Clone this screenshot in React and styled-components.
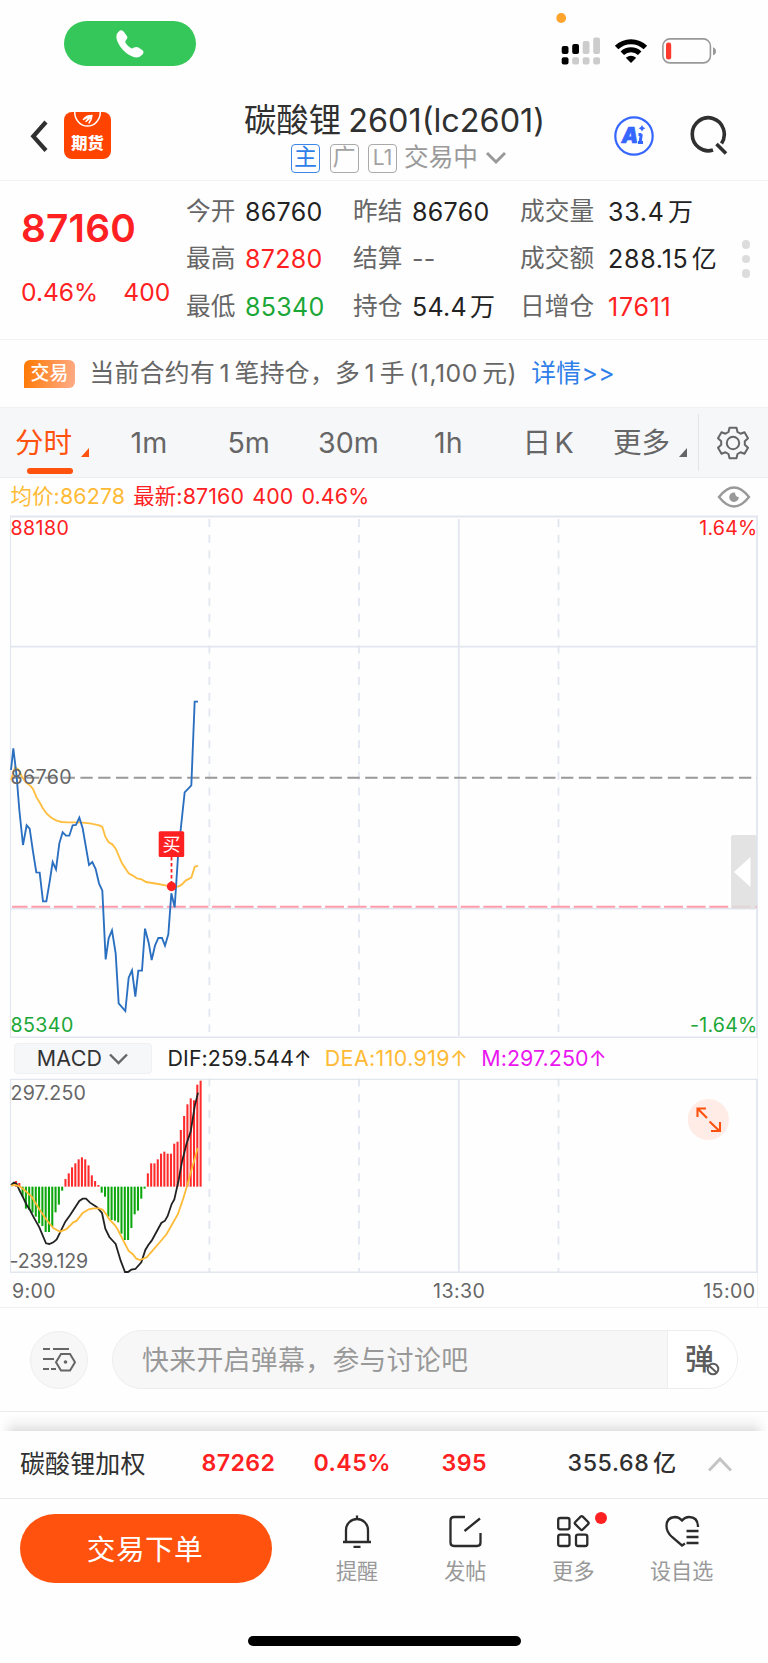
import styled, { createGlobalStyle } from 'styled-components';

const red = '#ff2121';
const green = '#1ba737';
const orange = '#ff520e';
const grid = '#e2e6ef';

const GlobalStyle = createGlobalStyle`
* { box-sizing: border-box; }
body {
  margin: 0;
  background: #fff;
  color: #222;
  font-family: Inter, 'Noto Sans CJK SC', sans-serif;
  line-height: 1.2;
}
svg { display: block; flex: none; }
`

const Screen = styled.div`
width: 768px;
height: 1663px;
background: #fefefe;
display: flex;
flex-direction: column;
overflow: hidden;
white-space: nowrap;
`

/* status bar */
const StatusBar = styled.div`
height: 90px;
display: flex;
justify-content: space-between;
padding: 0 50px 0 64px;
`
const CallPill = styled.div`
width: 132px;
height: 45px;
margin-top: 21.3px;
border-radius: 23px;
background: #35c759;
display: flex;
align-items: center;
justify-content: center;
`

/* header */
const Header = styled.header`
height: 91px;
border-bottom: 1.5px solid #f3f3f4;
display: flex;
align-items: flex-start;
padding: 0 33px 0 30px;
`
const Back = styled.svg`
width: 18px;
height: 32px;
margin-top: 30px;
`
const Logo = styled.div`
width: 47px;
height: 47px;
margin: 21.5px 0 0 16px;
border-radius: 8px;
background: #ff4400;
color: #fff;
font-size: 16.3px;
font-weight: 900;
line-height: 13px;
text-align: center;
`
const TitleBlock = styled.div`
width: 320px;
margin-left: 123px;
display: flex;
flex-direction: column;
align-items: center;
`
const Title = styled.h1`
margin: 12px 0 0 1px;
font-size: 32.4px;
line-height: 38px;
font-weight: 400;
color: #303030;
word-spacing: -2px;
`
const SubTitle = styled.div`
margin: 4px 0 0 9px;
height: 28px;
display: flex;
align-items: center;
color: #999;
font-size: 24.6px;
`
const Tag = styled.span`
width: 29px;
height: 29px;
margin-right: ${p => p.$small ? 7 : 9.5}px;
border: 1.5px solid ${p => p.$active ? '#3c86ea' : '#aaa'};
border-radius: 4px;
color: ${p => p.$active ? '#2f7fe8' : '#a2a2a2'};
font-size: ${p => p.$small ? 21 : 23}px;
line-height: 25px;
text-align: center;
`
const HeaderIcons = styled.div`
margin: 24px 0 0 59px;
display: flex;
gap: 33px;
`

/* quote */
const Quote = styled.section`
height: 159px;
border-bottom: 1.5px solid #f3f3f4;
display: flex;
align-items: center;
`
const Price = styled.div`
width: 186px;
height: 158px;
padding: 23px 0 0 21px;
color: ${red};
`
const Last = styled.div`
font-size: 38.8px;
line-height: 48px;
font-weight: 600;
letter-spacing: 0.2px;
`
const Change = styled.div`
display: flex;
gap: 25px;
margin-top: 24.5px;
font-size: 24.6px;
line-height: 30px;
`
const Stats = styled.div`
display: grid;
grid-template-columns: 59px 108px 59px 108px 88px 129px;
grid-auto-rows: 47.3px;
align-items: center;
margin-top: -1.5px;
font-size: 25px;
`
const Label = styled.span`
color: #666;
font-size: 24.7px;
`
const Value = styled.span`
color: ${p => p.$color || '#222'};
letter-spacing: ${p => p.$wide ? 0.75 : 0.3}px;
word-spacing: -4.5px;
`
const Dots = styled.div`
display: flex;
flex-direction: column;
gap: 6px;
margin: -2px 0 0 4.5px;
span {
  width: 8.6px;
  height: 8.6px;
  border-radius: 50%;
  background: #dcdcdc;
}
`

/* position notice */
const Notice = styled.section`
height: 67px;
padding: 1px 0 0 24px;
display: flex;
align-items: center;
font-size: 24.8px;
letter-spacing: 0.3px;
color: #666;
`
const Badge = styled.span`
width: 51px;
height: 28px;
margin-right: 14.5px;
border-radius: 6px 6px 6px 0;
background: linear-gradient(100deg, #ff7800, #ffac8a);
color: #fff;
font-size: 18.8px;
font-weight: 500;
line-height: 27px;
text-align: center;
`
const Num = styled.span`
margin: 0 4.5px;
letter-spacing: 0.5px;
`
const Link = styled.a`
margin-left: 14.5px;
color: #2f7fe8;
`

/* period tabs */
const Tabs = styled.nav`
height: 71px;
background: #f6f7f9;
border-top: 1.5px solid #f0f1f2;
border-bottom: 1.5px solid #ebecee;
display: grid;
grid-template-columns: 99px repeat(5, 99.8px) 100.5px 1fr;
align-items: center;
`
const Tab = styled.div`
height: 68px;
display: flex;
flex-direction: column;
align-items: ${p => p.$menu ? 'flex-start' : 'center'};
padding: ${p => p.$menu ? '17px 0 0 15px' : '17px 0 0'};
color: ${p => p.$active ? orange : '#666'};
font-size: 28.6px;
line-height: 34px;
word-spacing: -4.5px;
&::after {
  content: '';
  width: 46px;
  height: 6px;
  margin: 8.5px 0 0 12px;
  border-radius: 3px;
  background: ${p => p.$active ? orange : 'none'};
}
`
const TabText = styled.span`
display: flex;
align-items: flex-end;
gap: 8.5px;
svg { margin-bottom: 3px; }
`
const Settings = styled.div`
height: 57px;
border-left: 1.5px solid #e3e4e6;
display: flex;
align-items: center;
padding-left: 17px;
`

/* charts */
const Legend = styled.div`
height: 37px;
padding: 0 17px 0 10.5px;
display: flex;
align-items: center;
gap: 8px;
font-size: 21.4px;
letter-spacing: 0.15px;
color: ${red};
svg { margin-left: auto; }
`
const Avg = styled.span`
color: #ffba35;
`
const Plot = styled.svg`
width: 768px;
height: ${p => p.$height}px;
font-size: 19.6px;
letter-spacing: 0.4px;
`
const MacdBar = styled.div`
width: 758px;
height: 40px;
border-right: 1.5px solid #eff1f5;
padding: 1px 0 0 14px;
display: flex;
align-items: center;
gap: 13px;
font-size: 21.4px;
`
const Picker = styled.button`
width: 138px;
height: 31px;
border: 1px solid #eff0f2;
border-radius: 4px;
background: #f6f7f9;
color: #333;
display: flex;
align-items: center;
justify-content: center;
gap: 7px;
margin-right: 2.5px;
padding: 0 1px 0 0;
font: inherit;
letter-spacing: 0.3px;
`
const Series = styled.span`
color: ${p => p.$color};
letter-spacing: ${p => p.$spacing || 0.1}px;
`
const Axis = styled.div`
width: 758px;
height: 34px;
border-right: 1.5px solid #eff1f5;
padding: 4px 1.5px 0 12px;
display: flex;
justify-content: space-between;
align-items: center;
font-size: 19.6px;
letter-spacing: 0.4px;
color: #666;
span:nth-child(2) { margin-left: 327px; margin-right: 168px; }
`

/* comment row */
const CommentRow = styled.section`
height: 105px;
border-top: 1.5px solid #f0f0f0;
border-bottom: 1.5px solid #eaeaea;
display: flex;
align-items: center;
gap: 24px;
padding: 0 30px;
`
const RoundButton = styled.div`
width: 58px;
height: 58px;
border: 1px solid #eee;
border-radius: 50%;
background: #f7f7f7;
display: flex;
align-items: center;
justify-content: center;
`
const Comment = styled.div`
width: 626px;
height: 59px;
border: 1.5px solid #ededed;
border-radius: 30px;
background: #f7f7f7;
display: flex;
overflow: hidden;
`
const Placeholder = styled.span`
width: 555px;
padding-left: 29px;
color: #999;
font-size: 26.8px;
line-height: 58.5px;
letter-spacing: 0.4px;
border-right: 1.5px solid #ededed;
`
const Danmu = styled.span`
flex: 1;
position: relative;
padding-left: 17px;
background: #fff;
color: #5c5c5c;
font-size: 29px;
font-weight: 500;
line-height: 57px;
svg { position: absolute; left: 37.5px; top: 30.5px; }
`
const Shade = styled.div`
height: 18.5px;
background: linear-gradient(90deg, #fff, transparent 2%, transparent 98%, #fff), linear-gradient(#fff 10%, #f4f4f4 60%, #e2e2e2);
`

/* bottom */
const IndexRow = styled.section`
height: 68.5px;
border-bottom: 1.5px solid #eaeaea;
display: grid;
grid-template-columns: 181.5px 112px 128px 126px 140px 1fr;
align-items: center;
padding: 0 0 0 20px;
font-size: 23.2px;
font-weight: 600;
letter-spacing: 0.4px;
color: ${red};
`
const Name = styled.span`
color: #303030;
font-size: 25px;
font-weight: 400;
letter-spacing: 0.1px;
`
const Amount = styled.span`
color: #303030;
font-weight: 500;
letter-spacing: 0.6px;
word-spacing: -3px;
`
const BottomBar = styled.footer`
flex: 1;
display: flex;
align-items: flex-start;
padding: 14.5px 0 0 20px;
`
const TradeButton = styled.button`
width: 252px;
height: 69px;
margin-right: 31px;
border: 0;
border-radius: 35px;
background: ${orange};
color: #fff;
padding: 2px 2px 0 0;
font: 400 28.6px/67px Inter, 'Noto Sans CJK SC', sans-serif;
letter-spacing: 0.5px;
`
const Action = styled.div`
width: 108.2px;
position: relative;
display: flex;
flex-direction: column;
align-items: center;
gap: 10.5px;
color: #999;
font-size: 21.1px;
line-height: 28px;
`
const RedDot = styled.i`
position: absolute;
top: -2px;
left: 75.5px;
width: 12px;
height: 12px;
border-radius: 50%;
background: ${red};
`
const HomeBar = styled.div`
flex: none;
align-self: center;
width: 273px;
height: 10px;
margin-bottom: 17px;
border-radius: 5px;
background: #000;
`

const stats = [
  ['今开', '86760'], ['昨结', '86760'], ['成交量', '33.4 万'],
  ['最高', '87280', red], ['结算', '--', '#666'], ['成交额', '288.15 亿'],
  ['最低', '85340', green], ['持仓', '54.4 万'], ['日增仓', '17611', red],
]

// plotted at three units per pixel
const priceLine = '33,270 40,205 50,290 58,390 69,495 80,436 89,446 99,515 109,577 119,578 129,664 139,664 149,605 158,546 168,568 178,490 188,457 198,467 208,467 218,436 228,435 238,413 248,445 267,555 277,546 287,567 297,610 307,632 317,838 326,775 336,751 347,820 356,970 376,993 386,893 396,871 406,950 415,872 426,872 435,746 446,788 455,840 465,797 475,774 486,774 495,797 505,763 514,640 524,682 534,530 543,440 554,337 574,316 584,65 594,65'
const avgLine = '33,300 45,262 55,268 66,290 78,308 90,316 99,327 110,353 120,369 128,384 140,401 155,414 170,422 185,426 205,427 240,427 270,430 298,436 307,441 316,470 326,487 337,493 347,506 366,550 386,580 397,586 411,595 425,598 438,606 475,612 500,617 535,620 545,614 558,601 574,593 584,561 594,557'
const difLine = '33,465 42,458 50,462 58,480 68,500 80,525 90,540 100,560 118,592 138,640 148,642 160,637 170,628 180,608 196,575 210,556 238,513 248,506 258,506 270,518 290,531 306,549 316,596 328,621 347,642 362,692 375,726 384,726 394,719 406,717 424,697 436,660 445,645 455,632 484,579 495,572 503,558 515,522 523,508 536,450 546,395 560,340 572,305 584,230 594,188'
const deaLine = '33,467 45,465 60,470 75,482 95,500 118,538 140,570 160,594 180,605 200,597 220,577 230,572 248,549 268,537 282,535 297,535 308,539 318,552 328,568 345,586 354,600 370,632 386,663 397,671 409,686 420,690 440,682 455,665 480,636 500,612 534,552 550,505 562,465 572,428 583,390 593,354'
const bars = [
  453, 459, 500, 536, 540, 548, 560, 580, 588, 606, 606, 590, 547, 524, 482,
  447, 430, 412, 400, 388, 382, 388, 406, 436, 453, 465,
  488, 500, 560, 570, 572, 577, 611, 630, 630, 594, 553, 542, 506, 476,
  430, 400, 400, 388, 371, 365, 371, 371, 341, 335, 300, 258, 223, 205, 211, 164, 152,
]

const Corner = ({ color }) => <svg width="8" height="9"><path d="M8 0v9H0z" fill={color} /></svg>

const Chevron = ({ w, h, color, up, sw = 2.6 }) => (
  <svg width={w} height={h} fill="none" stroke={color} strokeWidth={sw}>
    <path d={up ? `M1 ${h - 1.5}L${w / 2} 2L${w - 1} ${h - 1.5}` : `M1 1.5L${w / 2} ${h - 2}L${w - 1} 1.5`} />
  </svg>
)

const StatusIcons = () => (
  <svg width="166" height="80" viewBox="552 0 166 80">
    <circle cx="561.2" cy="18" r="4.9" fill="#ffa52e" />
    {[46, 44, 41, 37.5].map((y, i) => (
      <g key={y}>
        <rect x={561.7 + i * 10.5} y={y} width="6.8" height={54 - y} rx="2" fill={i < 2 ? '#000' : '#ccc'} />
        <rect x={561.7 + i * 10.5} y="57.2" width="6.8" height="7.3" rx="2" fill={i < 1 ? '#000' : '#ccc'} />
      </g>
    ))}
    <g fill="none" stroke="#000" strokeWidth="5">
      <path d="M616.6 47.5a20.6 20.6 0 0 1 28.8 0" />
      <path d="M622.3 53.2a12.6 12.6 0 0 1 17.4 0" />
    </g>
    <path d="M631 63l-5.2-5.2q5.2-4 10.4 0z" />
    <rect x="662.9" y="38.9" width="47.5" height="24" rx="7" fill="none" stroke="#999" strokeWidth="1.6" />
    <rect x="666" y="42.5" width="5.2" height="17" rx="2.3" fill="#ff3b30" />
    <path d="M713 47.2q3 1 3 4t-3 4z" fill="#999" />
  </svg>
)

const PriceChart = () => (
  <Plot $height={523} viewBox="0 515 768 523">
    <g fill="none" stroke={grid} strokeWidth="1.8">
      <path d="M10 516.5H758M10.5 646.7H757M10.5 908.7H757M10 1037.5H758M458.8 519V1036M757 516V1038" />
      <path d="M10.5 516V1038" strokeWidth="1.2" />
      <path d="M209.4 519V1032M359 519V1032M558.5 519V1032" strokeDasharray="8 7.8" />
    </g>
    <path d="M11 777.7H757" stroke="#999" strokeWidth="2" strokeDasharray="12.3 5.5" strokeDashoffset="1.8" />
    <path d="M12 906.7H757" stroke="#ff9bab" strokeWidth="2" strokeDasharray="18.9 3.7" strokeDashoffset="3.3" />
    <g transform="translate(0 680) scale(0.33333)" fill="none" strokeWidth="5.6">
      <polyline points={avgLine} stroke="#ffbe40" />
      <polyline points={priceLine} stroke="#2b70c0" />
    </g>
    <text x="10.5" y="535.4" fill={red}>88180</text>
    <text x="757.5" y="535.4" fill={red} textAnchor="end" style={{ letterSpacing: 0.2 }}>1.64%</text>
    <text x="10.5" y="783.8" fill="#666">86760</text>
    <text x="10.5" y="1032" fill={green}>85340</text>
    <text x="757.5" y="1032" fill={green} textAnchor="end" style={{ letterSpacing: 0.2 }}>-1.64%</text>
    <path d="M171.5 857V882" stroke={red} strokeWidth="1.8" strokeDasharray="3.5 2.5" />
    <circle cx="171.5" cy="886.5" r="4.7" fill={red} />
    <rect x="158.7" y="831.3" width="25.5" height="25.7" rx="1.5" fill={red} />
    <text x="171.7" y="850.5" fill="#fff" fontSize="18" textAnchor="middle">买</text>
    <rect x="731" y="835" width="25.5" height="74" rx="2" fill="#dedede" fillOpacity="0.85" />
    <path d="M750.5 857V887L734 872z" fill="#fff" />
  </Plot>
)

const MacdChart = () => (
  <Plot $height={195} viewBox="0 1078 768 195">
    <g fill="none" stroke={grid} strokeWidth="1.8">
      <path d="M10 1272.5H758M458.8 1079V1272M757 1079V1273" />
      <path d="M10 1079.3H758M10.5 1079V1273" strokeWidth="1.2" />
      <path d="M209.4 1078.5V1272M359 1078.5V1272M558.5 1078.5V1272" strokeDasharray="8 7.8" />
    </g>
    <text x="10.5" y="1100.3" fill="#666" style={{ letterSpacing: 0.2 }}>297.250</text>
    <text x="9.5" y="1267.5" fill="#666" style={{ letterSpacing: -0.2 }}>-239.129</text>
    <g transform="translate(0 1030) scale(0.33333)" fill="none" strokeWidth="5.4">
      {bars.map((y, i) => (
        <path key={i} d={`M${48 + i * 9.89} 470V${y}`} stroke={y < 470 ? '#ff2b2b' : '#0da70d'} strokeWidth="6.2" />
      ))}
      <polyline points={difLine} stroke="#222" />
      <polyline points={deaLine} stroke="#ffba35" />
    </g>
    <circle cx="708.3" cy="1119.5" r="20.6" fill="#ffece6" />
    <path d="M707 1118L697.5 1108.5M697.5 1117V1108.5H706M709.5 1121.5L719.5 1131M711 1131H720V1122" fill="none" stroke={orange} strokeWidth="2.1" />
  </Plot>
)

const AiIcon = () => (
  <svg width="42" height="42" viewBox="0 0 42 42" fill="none" stroke="#3566ff">
    <circle cx="21" cy="22" r="18.7" strokeWidth="2.2" />
    <text x="8.5" y="29" fontSize="21" fontWeight="900" fontStyle="italic" fill="#3566ff" strokeWidth="0.6">A</text>
    <path d="M28.3 20L27 29.500M25.500 20.500h3M25 28.500h5" strokeWidth="3" />
    <path d="M29 11q.7 2.800 3.300 3.300q-2.600.7-3.300 3.300q-.7-2.600-3.300-3.300q2.600-.5 3.300-3.300z" fill="#3566ff" stroke="none" />
  </svg>
)
const SearchIcon = () => (
  <svg width="40" height="42" fill="none" stroke="#303030" strokeWidth="3.6">
    <path d="M25 36A16 16.5 0 1 1 33.5 29.5M28.5 30L38 39.5" />
  </svg>
)
const GearIcon = () => (
  <svg width="34" height="34" viewBox="-17 -17 34 34" fill="none" stroke="#666" strokeWidth="2">
    <path d="M-3.5 -15.3H3.5L4.5 -11L7.5 -9.3L11.5 -10.8L15 -4.8L11.8 -1.8V1.8L15 4.8L11.5 10.8L7.5 9.3L4.5 11L3.5 15.3H-3.5L-4.5 11L-7.5 9.3L-11.5 10.8L-15 4.8L-11.8 1.8V-1.8L-15 -4.8L-11.5 -10.8L-7.5 -9.3L-4.5 -11Z" strokeLinejoin="round" />
    <circle r="6.2" />
  </svg>
)
const BellIcon = () => (
  <svg width="32" height="34" fill="none" stroke="#2b2b2b" strokeWidth="2.3">
    <path d="M5 27.5V16a11 11 0 0 1 22 0v11.5M2 28h28M16 1.5V5M12.5 32.8h7" />
  </svg>
)
const PostIcon = () => (
  <svg width="34" height="34" fill="none" stroke="#2b2b2b" strokeWidth="2.3">
    <path d="M17 3H6Q2.5 3 2.5 6.5V28.5Q2.5 32 6 32H29Q32.5 32 32.5 28.5V19M16.5 17L32 4.5" />
  </svg>
)
const MoreIcon = () => (
  <svg width="34" height="34" fill="none" stroke="#2b2b2b" strokeWidth="2.3">
    <rect x="2.2" y="4" width="11.3" height="11.3" rx="2" />
    <rect x="2.2" y="20.7" width="11.3" height="11.3" rx="2" />
    <rect x="20" y="20.7" width="11.3" height="11.3" rx="2" />
    <rect x="20.4" y="3.8" width="10.6" height="10.6" rx="1.5" transform="rotate(45 25.7 9.1)" />
  </svg>
)
const HeartIcon = () => (
  <svg width="36" height="34" fill="none" stroke="#2b2b2b" strokeWidth="2.3">
    <path d="M34 13Q34 3 25 3Q21 3 18 6.5Q15 3 11 3Q2.5 3.5 2.5 12Q2.5 18 8 23L18 31.5L21 29.5M22.5 17h12M22.5 23h12M22.5 29h12" />
  </svg>
)

export default function App() {
  return (
    <Screen>
      <GlobalStyle />
      <StatusBar>
        <CallPill>
          <svg width="28" height="28" viewBox="0 0 28 28" fill="#fff">
            <path d="M3.2 1Q6 -1 8 2L11 6.2Q12 8 10.3 9.8Q8.5 11.5 10 13.5Q12 16.5 14.8 18Q16.5 19 18 17.6Q20.3 16.3 22.5 17.6L26.5 20.3Q28.5 22 26.5 24.5Q23 28.5 17.5 27Q10 24.5 4.5 17Q-3 6 3.2 1z" />
          </svg>
        </CallPill>
        <StatusIcons />
      </StatusBar>

      <Header>
        <Back fill="none" stroke="#303030" strokeWidth="4.2">
          <path d="M16 2L3.3 16.3L16 30.5" />
        </Back>
        <Logo>
          <svg width="47" height="25" viewBox="0 0 47 25" fill="none" stroke="#fff" strokeWidth="1.5" strokeLinecap="round">
            <path d="M10.7 0A12.7 14 0 0 0 36.3 0" />
            <path d="M19.5 7.5Q22 3.5 28 3.5Q22 5.5 19.5 7.5M22 9.5Q24 5.5 28 3.5Q25.5 7 22 9.5M25 11Q27.5 8 28 3.5" />
          </svg>
          期货
        </Logo>
        <TitleBlock>
          <Title>碳酸锂 2601(lc2601)</Title>
          <SubTitle>
            <Tag $active>主</Tag>
            <Tag>广</Tag>
            <Tag $small>L1</Tag>
            交易中
            <svg width="28" height="14" fill="none" stroke="#999" strokeWidth="3">
              <path d="M9 2L18 11L27 2" />
            </svg>
          </SubTitle>
        </TitleBlock>
        <HeaderIcons>
          <AiIcon />
          <SearchIcon />
        </HeaderIcons>
      </Header>

      <Quote>
        <Price>
          <Last>87160</Last>
          <Change><span>0.46%</span><span>400</span></Change>
        </Price>
        <Stats>
          {stats.map(([label, value, color], i) => [
            <Label key={label}>{label}</Label>,
            <Value key={label + 'v'} $color={color} $wide={i % 3 === 2}>{value}</Value>,
          ])}
        </Stats>
        <Dots><span /><span /><span /></Dots>
      </Quote>

      <Notice>
        <Badge>交易</Badge>
        当前合约有<Num>1</Num>笔持仓，多<Num>1</Num>手<Num>(1,100</Num>元)
        <Link>详情&gt;&gt;</Link>
      </Notice>

      <Tabs>
        <Tab $menu $active><TabText>分时 <Corner color={orange} /></TabText></Tab>
        {['1m', '5m', '30m', '1h', '日 K'].map(t => <Tab key={t}>{t}</Tab>)}
        <Tab $menu><TabText>更多 <Corner color="#666" /></TabText></Tab>
        <Settings><GearIcon /></Settings>
      </Tabs>

      <Legend>
        <Avg>均价:86278</Avg>
        <span>最新:87160</span>
        <span>400</span>
        <span>0.46%</span>
        <svg width="34" height="22" viewBox="0 0 34 22" fill="none" stroke="#999" strokeWidth="2.4">
          <path d="M2 11Q17 -8 32 11Q17 30 2 11z" />
          <path d="M18 6.5a4.8 4.8 0 1 0 3.8 4.5q-3.5 0-3.8-4.5z" fill="#999" stroke="none" />
        </svg>
      </Legend>
      <PriceChart />
      <MacdBar>
        <Picker>MACD <Chevron w={19} h={12} color="#666" sw={2.4} /></Picker>
        <Series $color="#222">DIF:259.544↑</Series>
        <Series $color="#ffba35" $spacing={0.4}>DEA:110.919↑</Series>
        <Series $color="#e916f0">M:297.250↑</Series>
      </MacdBar>
      <MacdChart />
      <Axis><span>9:00</span><span>13:30</span><span>15:00</span></Axis>

      <CommentRow>
        <RoundButton>
          <svg width="34" height="26" fill="none" stroke="#666" strokeWidth="2">
            <path d="M1 2h7M11 2h16M1 12h11M1 22h6M9 22h5" />
            <path d="M19 7h9l5 8.2l-5 8.3h-9l-5-8.3z" />
            <circle cx="23.5" cy="15" r="1.8" fill="#666" stroke="none" />
          </svg>
        </RoundButton>
        <Comment>
          <Placeholder>快来开启弹幕，参与讨论吧</Placeholder>
          <Danmu>
            弹
            <svg width="14" height="14" fill="#fff" stroke="#5c5c5c" strokeWidth="2">
              <circle cx="7" cy="7" r="5.3" />
              <path d="M3.5 4L10.5 10.5" />
            </svg>
          </Danmu>
        </Comment>
      </CommentRow>
      <Shade />

      <IndexRow>
        <Name>碳酸锂加权</Name>
        <span>87262</span>
        <span>0.45%</span>
        <span>395</span>
        <Amount>355.68 亿</Amount>
        <Chevron w={24} h={15} color="#c4c4c4" up sw={3} />
      </IndexRow>

      <BottomBar>
        <TradeButton>交易下单</TradeButton>
        <Action><BellIcon />提醒</Action>
        <Action><PostIcon />发帖</Action>
        <Action><MoreIcon />更多<RedDot /></Action>
        <Action><HeartIcon />设自选</Action>
      </BottomBar>
      <HomeBar />
    </Screen>
  )
}
